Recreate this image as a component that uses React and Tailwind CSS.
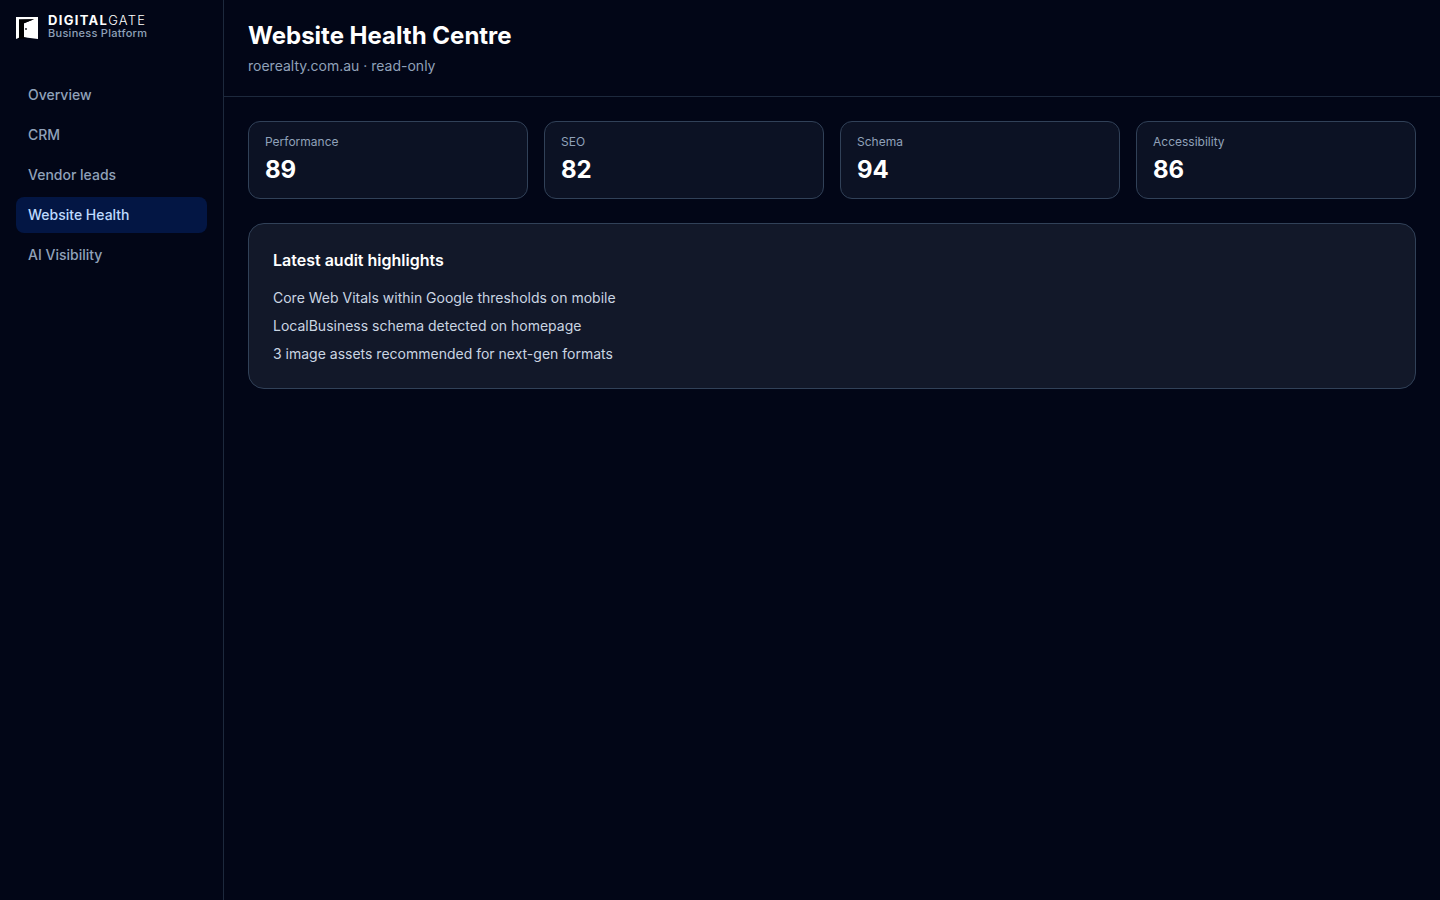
const navItems = ["Overview", "CRM", "Vendor leads", "Website Health", "AI Visibility"];

const scores = [
  { label: "Performance", value: 89 },
  { label: "SEO", value: 82 },
  { label: "Schema", value: 94 },
  { label: "Accessibility", value: 86 },
];

const highlights = [
  "Core Web Vitals within Google thresholds on mobile",
  "LocalBusiness schema detected on homepage",
  "3 image assets recommended for next-gen formats",
];

function DoorLogo() {
  return (
    <svg viewBox="0 0 22 22" className="size-[22px] shrink-0" aria-hidden="true">
      <path fill="#fff" d="M0 0h22v22L8 20.3V6.2L18 2.2 3 2.6V20.8L0 22z" />
      <path fill="#000" d="M3 2.6 18 2.2 8 6.2V20.3L12 21.2 2 22 3 20.8z" />
      <circle cx="10" cy="12" r="0.9" fill="#111" />
    </svg>
  );
}

function Sidebar() {
  return (
    <aside className="flex w-56 shrink-0 flex-col gap-[33px] border-r border-slate-800 px-4 py-3">
      <a href="#home" className="flex h-8 items-center gap-2.5">
        <DoorLogo />
        <span className="flex flex-col pb-[3px]">
          <span className="text-[13px] leading-[13px] font-bold tracking-widest text-white">
            DIGITAL<span className="font-light">GATE</span>
          </span>
          <span className="text-[11px] leading-3 font-medium tracking-wide text-slate-400">Business Platform</span>
        </span>
      </a>
      <nav className="flex flex-col gap-1" aria-label="Main">
        {navItems.map((item) => {
          const active = item === "Website Health";
          return (
            <a
              key={item}
              href="#section"
              aria-current={active ? "page" : undefined}
              className={
                "rounded-lg px-3 py-2 text-sm font-medium " +
                (active ? "bg-[#031644] text-blue-200" : "text-slate-400")
              }
            >
              {item}
            </a>
          );
        })}
      </nav>
    </aside>
  );
}

export default function App() {
  return (
    <div className="flex min-h-screen bg-[#020617] font-[Inter,sans-serif] text-white">
      <Sidebar />
      <div className="min-w-0 flex-1">
        <header className="flex flex-col gap-1 border-b border-slate-800 px-6 py-5">
          <h1 className="text-2xl font-bold">Website Health Centre</h1>
          <p className="text-sm text-slate-400">roerealty.com.au · read-only</p>
        </header>
        <main className="flex flex-col gap-6 p-6">
          <section className="grid grid-cols-4 gap-4" aria-label="Scores">
            {scores.map((score) => (
              <div
                key={score.label}
                className="flex flex-col gap-1 rounded-xl border border-slate-700 bg-[#0c1224] px-4 py-3"
              >
                <p className="text-xs text-slate-400">{score.label}</p>
                <p className="text-2xl font-bold">{score.value}</p>
              </div>
            ))}
          </section>
          <section className="flex flex-col gap-4 rounded-2xl border border-slate-700 bg-[#121829] p-6">
            <h2 className="text-base font-semibold">Latest audit highlights</h2>
            <ul className="flex flex-col gap-2 text-sm text-slate-300">
              {highlights.map((text) => (
                <li key={text}>{text}</li>
              ))}
            </ul>
          </section>
        </main>
      </div>
    </div>
  );
}
